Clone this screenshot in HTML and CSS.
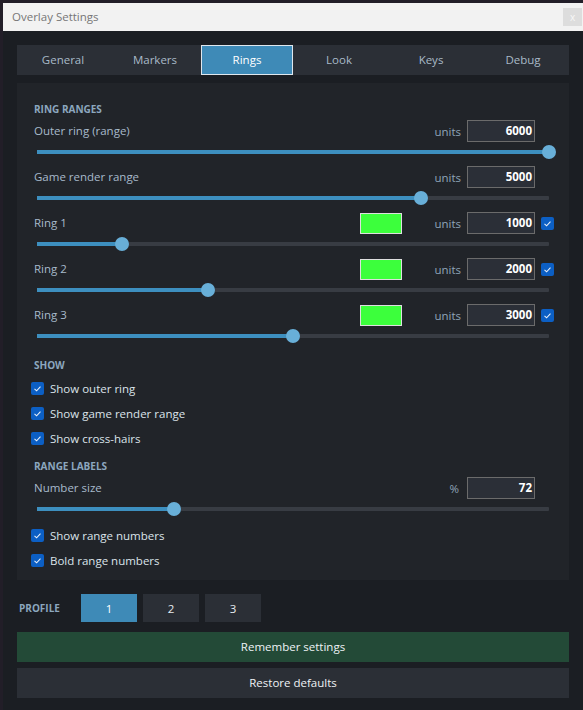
FILE: index.html
```html
<!DOCTYPE html>
<html>
<head>
<meta charset="utf-8">
<title>Overlay Settings</title>
<link rel="stylesheet" href="styles.css">
</head>
<body>
<div class="window">
  <div class="titlebar">
    <span class="title">Overlay Settings</span>
    <span class="close">x</span>
  </div>
  <div class="content">
    <div class="tabs">
      <div class="tab">General</div>
      <div class="tab">Markers</div>
      <div class="tab active">Rings</div>
      <div class="tab">Look</div>
      <div class="tab">Keys</div>
      <div class="tab">Debug</div>
    </div>

    <div class="panel">
      <div class="heading">RING RANGES</div>

      <div class="setting">
        <div class="row">
          <span class="label">Outer ring (range)</span>
          <span class="unit">units</span>
          <span class="num">6000</span>
          <span class="cb-slot"></span>
        </div>
        <div class="slider"><div class="track"><div class="fill" style="width:100%"></div><div class="thumb" style="left:100%"></div></div></div>
      </div>

      <div class="setting">
        <div class="row">
          <span class="label">Game render range</span>
          <span class="unit">units</span>
          <span class="num">5000</span>
          <span class="cb-slot"></span>
        </div>
        <div class="slider"><div class="track"><div class="fill" style="width:75%"></div><div class="thumb" style="left:75%"></div></div></div>
      </div>

      <div class="setting">
        <div class="row">
          <span class="label">Ring 1</span>
          <span class="swatch"></span>
          <span class="unit">units</span>
          <span class="num">1000</span>
          <span class="cb-slot"><span class="cb"><svg viewBox="0 0 13 13" width="13" height="13"><polyline points="3.5,6.8 5.6,8.8 9.5,4.6" fill="none" stroke="#e8f0fa" stroke-width="1.1"/></svg></span></span>
        </div>
        <div class="slider"><div class="track"><div class="fill" style="width:16.6%"></div><div class="thumb" style="left:16.6%"></div></div></div>
      </div>

      <div class="setting">
        <div class="row">
          <span class="label">Ring 2</span>
          <span class="swatch"></span>
          <span class="unit">units</span>
          <span class="num">2000</span>
          <span class="cb-slot"><span class="cb"><svg viewBox="0 0 13 13" width="13" height="13"><polyline points="3.5,6.8 5.6,8.8 9.5,4.6" fill="none" stroke="#e8f0fa" stroke-width="1.1"/></svg></span></span>
        </div>
        <div class="slider"><div class="track"><div class="fill" style="width:33.4%"></div><div class="thumb" style="left:33.4%"></div></div></div>
      </div>

      <div class="setting">
        <div class="row">
          <span class="label">Ring 3</span>
          <span class="swatch"></span>
          <span class="unit">units</span>
          <span class="num">3000</span>
          <span class="cb-slot"><span class="cb"><svg viewBox="0 0 13 13" width="13" height="13"><polyline points="3.5,6.8 5.6,8.8 9.5,4.6" fill="none" stroke="#e8f0fa" stroke-width="1.1"/></svg></span></span>
        </div>
        <div class="slider"><div class="track"><div class="fill" style="width:50%"></div><div class="thumb" style="left:50%"></div></div></div>
      </div>

      <div class="heading spaced">SHOW</div>
      <div class="check-row"><span class="cb"><svg viewBox="0 0 13 13" width="13" height="13"><polyline points="3.5,6.8 5.6,8.8 9.5,4.6" fill="none" stroke="#e8f0fa" stroke-width="1.1"/></svg></span><span class="check-label">Show outer ring</span></div>
      <div class="check-row"><span class="cb"><svg viewBox="0 0 13 13" width="13" height="13"><polyline points="3.5,6.8 5.6,8.8 9.5,4.6" fill="none" stroke="#e8f0fa" stroke-width="1.1"/></svg></span><span class="check-label">Show game render range</span></div>
      <div class="check-row"><span class="cb"><svg viewBox="0 0 13 13" width="13" height="13"><polyline points="3.5,6.8 5.6,8.8 9.5,4.6" fill="none" stroke="#e8f0fa" stroke-width="1.1"/></svg></span><span class="check-label">Show cross-hairs</span></div>

      <div class="heading spaced">RANGE LABELS</div>
      <div class="setting">
        <div class="row">
          <span class="label">Number size</span>
          <span class="unit pct">%</span>
          <span class="num">72</span>
          <span class="cb-slot"></span>
        </div>
        <div class="slider"><div class="track"><div class="fill" style="width:26.8%"></div><div class="thumb" style="left:26.8%"></div></div></div>
      </div>
      <div class="check-row"><span class="cb"><svg viewBox="0 0 13 13" width="13" height="13"><polyline points="3.5,6.8 5.6,8.8 9.5,4.6" fill="none" stroke="#e8f0fa" stroke-width="1.1"/></svg></span><span class="check-label">Show range numbers</span></div>
      <div class="check-row"><span class="cb"><svg viewBox="0 0 13 13" width="13" height="13"><polyline points="3.5,6.8 5.6,8.8 9.5,4.6" fill="none" stroke="#e8f0fa" stroke-width="1.1"/></svg></span><span class="check-label">Bold range numbers</span></div>
    </div>

    <div class="profile">
      <span class="profile-label">PROFILE</span>
      <span class="pbtn active">1</span>
      <span class="pbtn">2</span>
      <span class="pbtn">3</span>
    </div>
    <div class="wide remember">Remember settings</div>
    <div class="wide restore">Restore defaults</div>
  </div>
</div>
</body>
</html>
```

FILE: styles.css
```css
html {
  background: #221e28;
  height: 100%;
}
body {
  margin: 0;
  height: 100%;
  font-family: "Open Sans", "Noto Sans", sans-serif;
  font-size: 11.5px;
}
.window {
  margin: 3px 0 0 3px;
  height: calc(100% - 3px);
  background: #1b1e23;
  display: flex;
  flex-direction: column;
}
.titlebar {
  height: 28px;
  background: #f2f2f2;
  display: flex;
  align-items: center;
  justify-content: space-between;
  padding-left: 9px;
}
.title {
  color: #767676;
  font-size: 11.5px;
  margin-top: -2px;
}
.close {
  width: 19px;
  height: 18px;
  background: #dddddd;
  color: #f7f7f7;
  font-size: 10px;
  display: flex;
  align-items: center;
  justify-content: center;
  margin-right: 1px;
}
.content {
  padding: 14px 14px 0 14px;
  flex: 1;
}
.tabs {
  display: grid;
  grid-template-columns: repeat(6, 1fr);
  height: 30px;
  background: #2b2f36;
}
.tab {
  display: flex;
  align-items: center;
  justify-content: center;
  color: #a9bac8;
  font-size: 11.5px;
  padding-bottom: 1px;
}
.tab.active {
  background: #3e8ab7;
  border: 1px solid #dfe7ee;
  color: #ffffff;
}
.panel {
  margin-top: 8px;
  background: #212429;
  padding: 19px 15px 7px 17px;
}
.heading {
  height: 14px;
  line-height: 14px;
  margin-bottom: 4px;
  font-weight: 700;
  font-size: 10px;
  color: #8ca7bf;
}
.heading.spaced {
  margin-top: 8px;
}
.row {
  display: flex;
  align-items: center;
  height: 22px;
}
.label {
  flex: 1;
  color: #a8bacb;
  margin-bottom: 1px;
}
.swatch {
  width: 42px;
  height: 21px;
  box-sizing: border-box;
  border: 1px solid #dedede;
  background: #3cff3c;
  margin-right: 32px;
}
.unit {
  color: #8fa4b8;
  margin-right: 6px;
}
.unit.pct {
  margin-right: 8px;
}
.num {
  width: 68px;
  height: 22px;
  box-sizing: border-box;
  border: 1px solid #6b6b6b;
  background: #2b2f37;
  color: #ffffff;
  font-weight: 700;
  text-align: right;
  padding-right: 2px;
  line-height: 19px;
}
.cb-slot {
  width: 13px;
  height: 13px;
  margin-left: 6px;
  display: flex;
}
.cb {
  width: 13px;
  height: 13px;
  border-radius: 2px;
  background: #0c5fc4;
  display: flex;
}
.slider {
  height: 24px;
  padding: 8px 5px 0 3px;
  box-sizing: border-box;
}
.track {
  position: relative;
  height: 4px;
  background: #383c43;
  border-radius: 1px;
}
.fill {
  height: 4px;
  background: #3d8fbf;
}
.thumb {
  position: absolute;
  top: -5px;
  width: 14px;
  height: 14px;
  border-radius: 50%;
  background: #68afd8;
  transform: translateX(-50%);
}
.check-row {
  display: flex;
  align-items: center;
  height: 25px;
  margin-left: -3px;
}
.check-label {
  margin-left: 6px;
  color: #dbe3ea;
  margin-bottom: 1px;
}
.profile {
  margin-top: 14px;
  display: flex;
  align-items: center;
  height: 28px;
  padding-left: 2px;
}
.profile-label {
  width: 62px;
  color: #8ca7bf;
  font-weight: 700;
  font-size: 10px;
}
.pbtn {
  width: 56px;
  height: 28px;
  margin-right: 6px;
  background: #2b2f36;
  color: #e6ebef;
  display: flex;
  align-items: center;
  justify-content: center;
}
.pbtn.active {
  background: #3e8ab7;
  color: #ffffff;
}
.wide {
  height: 30px;
  display: flex;
  align-items: center;
  justify-content: center;
  color: #eef2f5;
  padding-bottom: 1px;
  box-sizing: border-box;
}
.remember {
  margin-top: 10px;
  background: #234a37;
}
.restore {
  margin-top: 6px;
  background: #2b2f36;
}
```
